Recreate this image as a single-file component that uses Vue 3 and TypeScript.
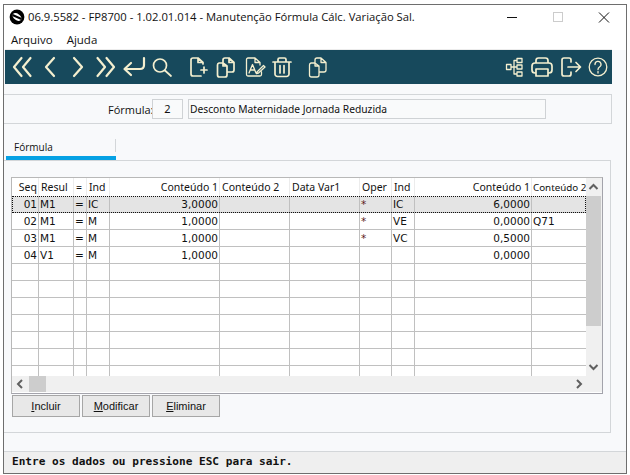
<script setup lang="ts">
interface Col { w: number; right?: boolean }
const cols: Col[] = [
  { w: 27, right: true }, { w: 35 }, { w: 13 }, { w: 23 }, { w: 110, right: true }, { w: 70 },
  { w: 70 }, { w: 32 }, { w: 23 }, { w: 117, right: true }, { w: 54 },
]
const gridTemplate = cols.map((c) => c.w + 'px').join(' ')
const header = ['Seq', 'Resul', '=', 'Ind', 'Conteúdo 1', 'Conteúdo 2', 'Data Var1', 'Oper', 'Ind', 'Conteúdo 1', 'Conteúdo 2']
const data: string[][] = [
  ['01', 'M1', '=', 'IC', '3,0000', '', '', '*', 'IC', '6,0000', ''],
  ['02', 'M1', '=', 'M', '1,0000', '', '', '*', 'VE', '0,0000', 'Q71'],
  ['03', 'M1', '=', 'M', '1,0000', '', '', '*', 'VC', '0,5000', ''],
  ['04', 'V1', '=', 'M', '1,0000', '', '', '', '', '0,0000', ''],
]
const rows: string[][] = [...data]
while (rows.length < 11) rows.push(Array(11).fill(''))
</script>

<template>
  <div class="screen">
    <div class="window">
      <div class="titlebar">
        <svg class="logo" width="16" height="16" viewBox="0 0 16 16">
          <circle cx="8" cy="8" r="7.4" fill="#000" />
          <ellipse cx="8" cy="8" rx="5" ry="3.2" fill="#fff" transform="rotate(35 8 8)" />
          <path d="M3.500 6 L12.500 10" stroke="#000" stroke-width="2" />
        </svg>
        <span class="title">06.9.5582 - FP8700 - 1.02.01.014 - Manutenção Fórmula Cálc. Variação Sal.</span>
        <div class="winctl">
          <svg width="46" height="23" viewBox="0 0 46 23"><path d="M18 12.500 H28" stroke="#111" /></svg>
          <svg width="46" height="23" viewBox="0 0 46 23"><rect x="18.500" y="7.500" width="9" height="9" fill="none" stroke="#ccc" /></svg>
          <svg width="46" height="23" viewBox="0 0 46 23"><path d="M18 7.500 L28 17.500 M28 7.500 L18 17.500" stroke="#111" /></svg>
        </div>
      </div>
      <div class="menubar">
        <span>Arquivo</span>
        <span>Ajuda</span>
      </div>
      <div class="content">
        <div class="toolbar">
          <svg class="ic" viewBox="0 0 28 28"><path d="M13.500 5 L6 14 L13.500 23 M22.500 5 L15 14 L22.500 23" /></svg>
          <svg class="ic" viewBox="0 0 28 28"><path d="M18 5 L10 14 L18 23" /></svg>
          <svg class="ic" viewBox="0 0 28 28"><path d="M10 5 L18 14 L10 23" /></svg>
          <svg class="ic" viewBox="0 0 28 28"><path d="M5.500 5 L13 14 L5.500 23 M14.500 5 L22 14 L14.500 23" /></svg>
          <svg class="ic" viewBox="0 0 28 28"><path d="M24 5 V12 Q24 16 20 16 H5 M11 10 L4.500 16 L11 22" /></svg>
          <svg class="ic thin" viewBox="0 0 28 28"><circle cx="12" cy="12.500" r="6.500" /><path d="M17 17.500 L23 23" /></svg>
          <div class="sp"></div>
          <svg class="ic thin" viewBox="0 0 28 28"><path d="M19 11 V9.500 L14 5 H9 A2 2 0 0 0 7 7 V21 A2 2 0 0 0 9 23 H17 M14 5 V9.500 H19 M20 14 V20 M17 17 H23" /></svg>
          <svg class="ic thin" viewBox="0 0 28 28"><path d="M11 10 H7 A2 2 0 0 0 5.500 12 V22 A2 2 0 0 0 7.500 24 H13 A2 2 0 0 0 15 22 V13 L11 10 V13 H15 M11 10 V7 A2 2 0 0 1 13 5 H17 L22 9.500 V17 A2 2 0 0 1 20 19 H15 M17 5 V9.500 H22" /></svg>
          <svg class="ic vthin" viewBox="0 0 28 28"><path d="M15 5 H8 A1.500 1.500 0 0 0 6.500 6.500 V21.500 A1.500 1.500 0 0 0 8 23 H20 A1.500 1.500 0 0 0 21.500 21.500 V19 M15 5 L20 9.500 V12 M15 5 V9.500 H20 M9 20 L12.500 11.500 L16 20 M10.300 17 H14.500 M17 19 L23.500 12.500 L25 14 L18.500 20 L16.500 20.500 Z" /></svg>
          <svg class="ic thin" viewBox="0 0 28 28"><path d="M5 9 H23 M10 9 V6.500 A1.500 1.500 0 0 1 11.500 5 H16.500 A1.500 1.500 0 0 1 18 6.500 V9 M7 9 V21 A2.500 2.500 0 0 0 9.500 23.500 H18.500 A2.500 2.500 0 0 0 21 21 V9 M12 12.500 V20 M16 12.500 V20" /></svg>
          <div class="sp"></div>
          <svg class="ic vthin" viewBox="0 0 28 28"><path d="M11 10 H7 A2 2 0 0 0 5.500 12 V22 A2 2 0 0 0 7.500 24 H13 A2 2 0 0 0 15 22 V13 L11 10 V13 H15 M11 10 V7 A2 2 0 0 1 13 5 H17 L22 9.500 V17 A2 2 0 0 1 20 19 H15 M17 5 V9.500 H22" /></svg>
          <div class="grow"></div>
          <svg class="ic vthin" viewBox="0 0 28 28"><path d="M6.500 11.500 H11 V16.500 H6.500 Z M17 5.500 H22 V9.500 H17 Z M17 12 H22 V16 H17 Z M17 19 H22 V23 H17 Z M11 14 H17 M14 7.500 H17 M14 7.500 V21 H17" /></svg>
          <svg class="ic thin" viewBox="0 0 28 28"><path d="M8 10 V7.500 A2.500 2.500 0 0 1 10.500 5 H17.500 A2.500 2.500 0 0 1 20 7.500 V10 M8 20 H7 A3 3 0 0 1 4 17 V13 A3 3 0 0 1 7 10 H21 A3 3 0 0 1 24 13 V17 A3 3 0 0 1 21 20 H20 M8 16 H20 V23 H8 Z" /></svg>
          <svg class="ic thin" viewBox="0 0 28 28"><path d="M15 9 V7 A2 2 0 0 0 13 5 H8 A2 2 0 0 0 6 7 V21 A2 2 0 0 0 8 23 H13 A2 2 0 0 0 15 21 V19 M12 14 H24 M20 9.500 L24.500 14 L20 18.500" /></svg>
          <svg class="ic vthin" viewBox="0 0 28 28"><circle cx="14" cy="14" r="8.800" /><path d="M11 11.500 A3 3 0 1 1 15.500 14 Q14 15 14 16.500 M14 18.500 V20" /></svg>
        </div>

        <div class="form-panel">
          <label class="form-label">Fórmula:</label>
          <div class="field code">2</div>
          <div class="field desc">Desconto Maternidade Jornada Reduzida</div>
        </div>

        <div class="tabs">
          <div class="tab">Fórmula</div>
        </div>

        <div class="tab-panel">
          <div class="table-box">
            <div class="table-top">
              <div class="table-cols">
                <div class="grid-row head" :style="{ gridTemplateColumns: gridTemplate }">
                  <div v-for="(h, i) in header" :key="i" class="hcell" :class="{ right: cols[i].right }">{{ h }}</div>
                </div>
                <div
                  v-for="(r, ri) in rows"
                  :key="ri"
                  class="grid-row body"
                  :class="{ selected: ri === 0 }"
                  :style="{ gridTemplateColumns: gridTemplate }"
                >
                  <div v-for="(c, ci) in r" :key="ci" class="cell" :class="{ right: cols[ci].right, star: c === '*' }">{{ c }}</div>
                </div>
              </div>
              <div class="vscroll">
                <svg width="15" height="18" viewBox="0 0 15 18"><path d="M3.500 11 L7.500 7 L11.500 11" class="arr" /></svg>
                <div class="vthumb"></div>
                <div class="grow"></div>
                <svg width="15" height="17" viewBox="0 0 15 17"><path d="M3.500 6 L7.500 10 L11.500 6" class="arr" /></svg>
              </div>
            </div>
            <div class="hscroll">
              <svg width="17" height="16" viewBox="0 0 17 16"><path d="M10 4 L6 8 L10 12" class="arr" /></svg>
              <div class="hthumb"></div>
              <div class="grow"></div>
              <svg width="34" height="16" viewBox="0 0 34 16"><path d="M9 4 L13 8 L9 12" class="arr" /></svg>
            </div>
          </div>
          <div class="buttons">
            <button class="btn"><u>I</u>ncluir</button>
            <button class="btn"><u>M</u>odificar</button>
            <button class="btn"><u>E</u>liminar</button>
          </div>
        </div>

        <div class="grow"></div>
        <div class="status">Entre os dados ou pressione ESC para sair.</div>
      </div>
    </div>
  </div>
</template>

<style>
html, body { margin: 0; background: #fff; }
</style>

<style scoped>
.screen { width: 630px; height: 475px; box-sizing: border-box; padding: 4px 3px 1px; overflow: hidden; }
.window { height: 100%; box-sizing: border-box; border: 1px solid #6e6e6e; display: flex; flex-direction: column; background: #fff; font-family: "Open Sans", "Noto Sans", sans-serif; color: #111; }
.titlebar { height: 23px; display: flex; align-items: center; flex: none; }
.logo { margin-left: 5px; flex: none; }
.title { margin-left: 3px; font-size: 11.25px; white-space: nowrap; flex: 1; }
.winctl { display: flex; margin-right: -1px; width: 138px; flex: none; }
.menubar { height: 22px; flex: none; display: flex; gap: 14px; padding-left: 7px; align-items: center; font-size: 11.5px; }
.content { flex: 1; min-height: 0; display: flex; flex-direction: column; background: #f8f9fb; }
.toolbar { height: 34px; flex: none; margin-left: 1px; width: 607px; box-sizing: border-box; padding-left: 2.5px; background: #17495c; display: flex; align-items: center; box-shadow: 0 -1px 0 #ececec; }
.ic { width: 28px; height: 28px; flex: none; fill: none; stroke: #f4efcf; stroke-width: 2.2; stroke-linecap: round; stroke-linejoin: round; }
.ic.thin { stroke-width: 1.7; }
.ic.vthin { stroke-width: 1.3; }
.sp { width: 8px; flex: none; }
.grow { flex: 1; }
.form-panel { margin: 10px 0 0; width: 608px; height: 30px; box-sizing: border-box; border: 1px solid #d3d6d9; border-left: 0; display: flex; align-items: center; padding-left: 104px; font-size: 11px; flex: none; }
.form-label { width: 44px; }
.field { height: 20px; box-sizing: border-box; border: 1px solid #cfd2d5; background: #f9fafb; font-family: "Noto Sans", sans-serif; font-size: 10.25px; line-height: 18px; padding-left: 1px; }
.code { width: 31px; text-align: center; padding: 0; font-size: 11px; }
.desc { width: 358px; margin-left: 5px; }
.tabs { margin-top: 15px; height: 21px; width: 607px; flex: none; border-bottom: 1px solid #d3d6d9; }
.tab { width: 110px; margin-left: 2px; height: 21px; box-sizing: border-box; padding: 0 0 0 8px; font-size: 10px; line-height: 16px; position: relative; border-bottom: 4px solid #06a1e4; }
.tab::after { content: ""; position: absolute; right: 0; top: 0; width: 1px; height: 13px; background: #d3d6d9; }
.tab-panel { width: 607px; height: 272px; flex: none; box-sizing: border-box; border: 1px solid #d3d6d9; border-width: 0 1px 1px 0; padding: 16px 7px 0 7px; }
.table-box { width: 592px; height: 217px; box-sizing: border-box; border: 1px solid #a3a3ab; border-top-color: #b8b8b8; border-left-color: #b8b8b8; background: #fff; display: flex; flex-direction: column; }
.table-top { height: 198px; display: flex; flex: none; }
.table-cols { width: 574px; overflow: hidden; flex: none; }
.grid-row { display: grid; }
.head { height: 18px; }
.hcell { font-size: 10.5px; line-height: 19px; padding: 0 1px 0 2px; white-space: nowrap; overflow: hidden; border-right: 1px solid #ececec; box-sizing: border-box; font-family: "Noto Sans", sans-serif; }
.hcell:last-child { font-size: 9.8px; padding-left: 1px; }
.body { height: 17px; position: relative; }
.cell { font-family: "DejaVu Sans", sans-serif; font-size: 10.5px; line-height: 17px; padding: 0 1px 0 1px; box-sizing: border-box; border-right: 1px solid #c0c0c0; border-bottom: 1px solid #c0c0c0; overflow: hidden; white-space: nowrap; }
.hcell:last-child, .cell:last-child { border-right: 0; padding-right: 0; }
.right { text-align: right; }
.star { color: #5c1a1a; }
.selected { background: #e4e4e4; }
.selected::after { content: ""; position: absolute; inset: 0; border: 1px dotted #111; pointer-events: none; }
.vscroll { width: 16px; flex: none; background: #f0f0f0; display: flex; flex-direction: column; }
.vthumb { width: 15px; height: 130px; background: #cdcdcd; flex: none; }
.arr { fill: none; stroke: #606060; stroke-width: 2; }
.hscroll { height: 16px; flex: none; background: #f0f0f0; display: flex; align-items: center; }
.hthumb { width: 17px; height: 16px; background: #cdcdcd; flex: none; }
.buttons { display: flex; gap: 2px; margin-top: 1px; padding-left: 1px; }
.btn { width: 68px; height: 22px; box-sizing: border-box; border: 1px solid #a6a6a6; background: #e8e8e8; padding: 0; font-family: "Liberation Sans", sans-serif; font-size: 11px; color: #111; }
.status { height: 22px; flex: none; box-sizing: border-box; border-top: 1px solid #d3d6d9; background: #efefef; font-family: "DejaVu Sans Mono", monospace; font-weight: bold; font-size: 11.1px; line-height: 20px; padding-left: 8px; }
</style>
